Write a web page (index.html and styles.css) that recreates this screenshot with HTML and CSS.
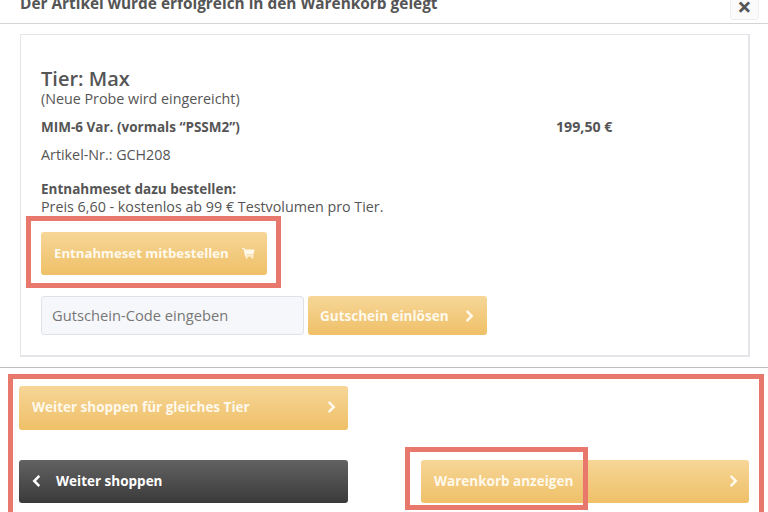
FILE: index.html
```html
<!DOCTYPE html>
<html lang="de">
<head>
<meta charset="UTF-8">
<title>Warenkorb</title>
<link rel="stylesheet" href="styles.css">
</head>
<body>

<main class="modal">

  <!-- Kopf -->
  <header class="modal-head">
    <h1>Der Artikel wurde erfolgreich in den Warenkorb gelegt</h1>
    <button class="close" type="button">×</button>
  </header>

  <!-- Artikel -->
  <section class="box">
    <h2>Tier: Max</h2>
    <p class="note">(Neue Probe wird eingereicht)</p>
    <div class="item">
      <strong>MIM-6 Var. (vormals “PSSM2”)</strong>
      <strong class="price">199,50 €</strong>
    </div>
    <p class="sku">Artikel-Nr.: GCH208</p>
    <p class="extra"><strong>Entnahmeset dazu bestellen:</strong><br>Preis 6,60 - kostenlos ab 99 € Testvolumen pro Tier.</p>

    <button class="btn btn--set" type="button">
      Entnahmeset mitbestellen
      <svg class="cart" viewBox="0 0 14 12" aria-hidden="true"><path d="M0 .6h2.6l.4 1.5h10.6l-1.3 5.4H4.4l.3 1h7.7v1.2H3.4L1.7 1.8H0z"/><circle cx="5" cy="10.9" r="1.1"/><circle cx="11" cy="10.9" r="1.1"/></svg>
    </button>

    <div class="voucher">
      <input class="code" type="text" placeholder="Gutschein-Code eingeben">
      <button class="btn btn--voucher" type="button">
        Gutschein einlösen
        <svg class="chev" viewBox="0 0 8 12" aria-hidden="true"><path d="M1.5 1.5 6 6l-4.5 4.5"/></svg>
      </button>
    </div>
  </section>

  <!-- Aktionen -->
  <footer class="actions">
    <button class="btn btn--wide btn--same" type="button">
      <span>Weiter shoppen für gleiches Tier</span>
      <svg class="chev" viewBox="0 0 8 12" aria-hidden="true"><path d="M1.5 1.5 6 6l-4.5 4.5"/></svg>
    </button>
    <div class="actions-row">
      <button class="btn btn--wide btn--dark" type="button">
        <svg class="chev" viewBox="0 0 8 12" aria-hidden="true"><path d="M6.5 1.5 2 6l4.5 4.5"/></svg>
        Weiter shoppen
      </button>
      <button class="btn btn--wide btn--cart" type="button">
        Warenkorb anzeigen
        <svg class="chev" viewBox="0 0 8 12" aria-hidden="true"><path d="M1.5 1.5 6 6l-4.5 4.5"/></svg>
      </button>
    </div>
  </footer>

</main>

<!-- Markierungen im Screenshot -->
<div class="mark mark--set"></div>
<div class="mark mark--actions"></div>
<div class="mark mark--cart"></div>

</body>
</html>
```

FILE: styles.css
```css
:root {
  --text: #555555;
  --gold-top: #f6d697;
  --gold-bottom: #efc068;
  --line: #e3e5e8;
  --mark: #e8776c;
}
* { margin: 0; padding: 0; box-sizing: border-box; }
html, body { height: 512px; overflow: hidden; }
body {
  position: relative;
  background: #ffffff;
  color: var(--text);
  font-family: "Open Sans", "Noto Sans", sans-serif;
  font-size: 13px;
}

/* ---------- Kopf ---------- */
.modal-head {
  display: flex;
  justify-content: space-between;
  align-items: flex-end;
  height: 34px;
  margin-top: -10px;
  padding: 0 9px 0 20px;
  border-bottom: 1px solid #d4d4d4;
}
.modal-head h1 {
  align-self: flex-start;
  font-size: 15.4px;
  font-weight: 700;
  line-height: 28px;
}
.close {
  width: 29px;
  height: 31px;
  margin-bottom: 3px;
  padding-top: 3px;
  border: 1px solid #efefef;
  border-radius: 3px;
  background: #fbfbfb;
  color: var(--text);
  font: 700 25px/1 "Open Sans", sans-serif;
}

/* ---------- Artikelbox ---------- */
.box {
  height: 323px;
  margin: 10px 18px 0 20px;
  padding: 32px 20px 0;
  border: 1px solid var(--line);
  border-width: 1px 2px 2px 1px;
}
.box h2 { font-size: 20px; font-weight: 600; line-height: 24px; }
.note { font-size: 14.3px; line-height: 16px; }
.item {
  display: flex;
  margin-top: 12px;
  font-size: 13.5px;
  line-height: 16px;
}
.item strong:first-child { width: 515px; }
.price { font-size: 14.2px; }
.sku { margin-top: 12px; font-size: 14.3px; line-height: 16px; }
.extra { margin-top: 17px; font-size: 14.3px; line-height: 18px; }
.extra strong { font-size: 13.5px; }

/* ---------- Buttons ---------- */
.btn {
  display: flex;
  justify-content: space-between;
  align-items: center;
  border: 0;
  border-radius: 3px;
  background: linear-gradient(var(--gold-top), var(--gold-bottom));
  color: #fff9ec;
  font: 700 13.5px "Open Sans", sans-serif;
  text-align: left;
}
.btn--set { width: 226px; height: 43px; margin-top: 16px; padding: 0 12px 2px 13px; font-size: 13.2px; }
.btn--voucher { width: 179px; height: 39px; padding: 0 13px 0 12px; }
.btn--wide { width: 329px; height: 44px; padding: 0 12px 0 13px; }
.btn--same { padding-bottom: 3px; }
.btn--dark {
  justify-content: flex-start;
  gap: 15px;
  background: linear-gradient(#626262, #3a3a3a);
  color: #ffffff;
}
.btn--cart { width: 328px; padding-right: 11px; }
.actions-row .btn { height: 43px; padding-bottom: 1px; }
.cart { width: 13px; height: 12px; fill: currentColor; }
.chev {
  width: 9px;
  height: 14px;
  fill: none;
  stroke: currentColor;
  stroke-width: 2.2;
}

/* ---------- Gutschein ---------- */
.voucher { display: flex; gap: 4px; margin-top: 21px; }
.code {
  width: 263px;
  height: 39px;
  padding: 0 10px 2px;
  border: 1px solid #dfe2e8;
  border-radius: 3px;
  background: #f6f7fa;
  font: 14.7px "Open Sans", sans-serif;
}
.code::placeholder { color: #777777; opacity: 1; }

/* ---------- Aktionen ---------- */
.actions {
  margin-top: 10px;
  padding: 18px 19px 0;
  border-top: 1px solid #bdbdbd;
}
.actions-row {
  display: flex;
  justify-content: space-between;
  margin-top: 30px;
}

/* ---------- Rote Markierungen ---------- */
.mark {
  position: absolute;
  border: 5px solid var(--mark);
}
.mark--set { left: 26px; top: 216px; width: 255px; height: 72px; }
.mark--actions { left: 8px; top: 374px; width: 756px; height: 150px; }
.mark--cart { left: 405px; top: 447px; width: 183px; height: 63px; }
```
